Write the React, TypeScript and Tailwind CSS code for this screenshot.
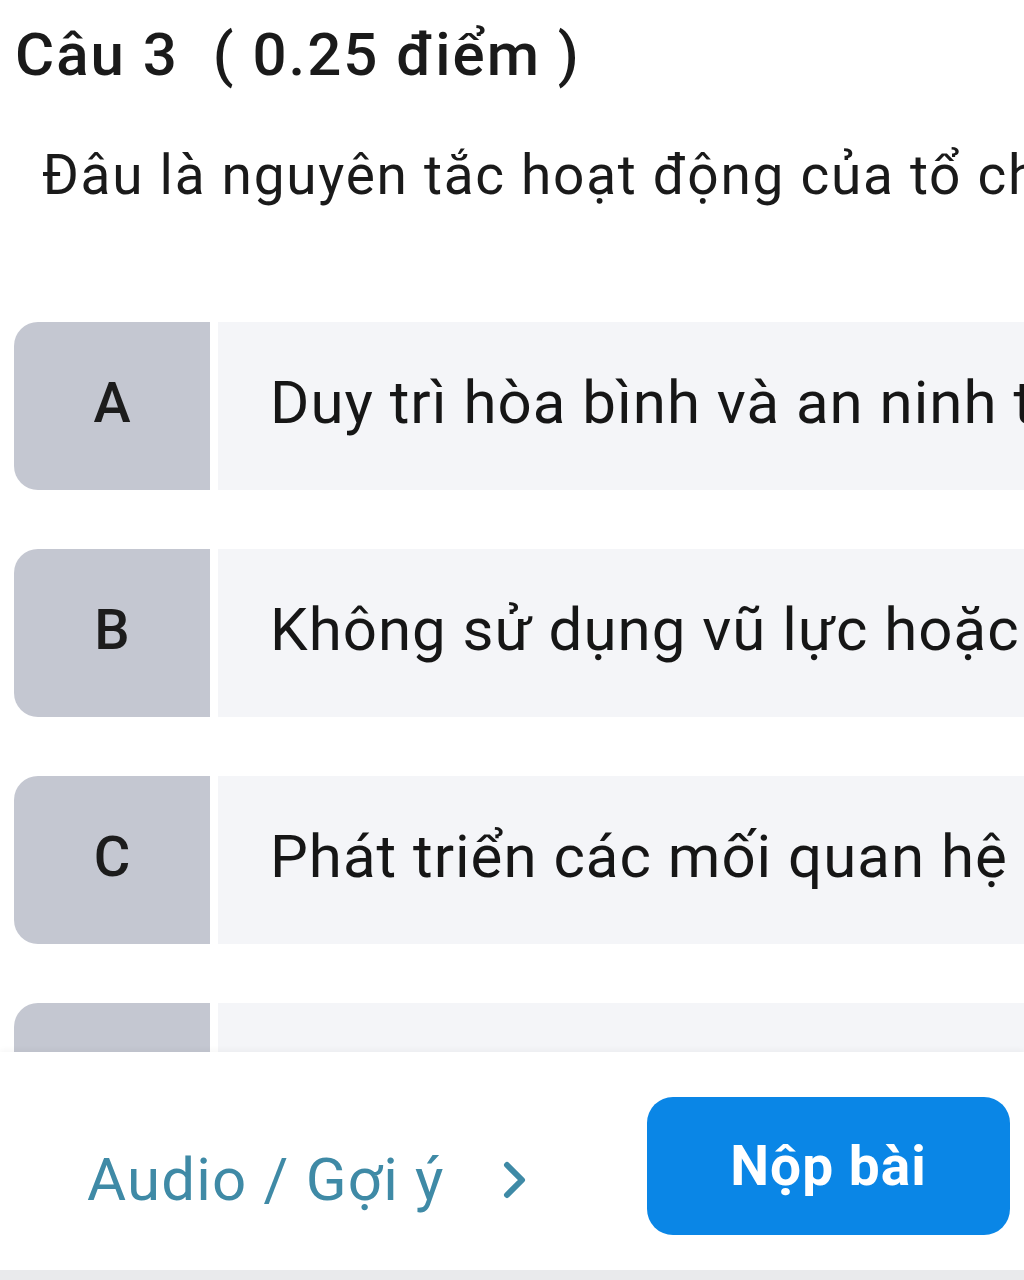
import React from "react";

interface Option {
  key: string;
  text: string;
}

const options: Option[] = [
  { key: "A", text: "Duy trì hòa bình và an ninh thế giới" },
  { key: "B", text: "Không sử dụng vũ lực hoặc đe dọa sử dụng vũ lực" },
  { key: "C", text: "Phát triển các mối quan hệ hữu nghị giữa các dân tộc" },
  { key: "D", text: "Giải quyết các tranh chấp bằng biện pháp hòa bình" },
];

const OptionRow: React.FC<{ option: Option }> = ({ option }) => (
  <div className="flex h-[168px] shrink-0 gap-[8px]">
    <div className="flex w-[196px] shrink-0 items-center justify-center rounded-l-[24px] bg-[#c4c7d1] pb-[6px] text-[56px] font-medium text-[#1c1c1c]">
      {option.key}
    </div>
    <div className="flex flex-1 items-center bg-[#f4f5f8] pb-[6px] pl-[52px] whitespace-nowrap text-[60px] tracking-[1px] text-[#161616]">
      {option.text}
    </div>
  </div>
);

const App: React.FC = () => {
  return (
    <div className="flex h-[1280px] w-[1024px] flex-col overflow-hidden bg-white font-['Roboto','Liberation_Sans',sans-serif]">
      <div className="h-[1052px] shrink-0 overflow-hidden">
        <h1 className="pl-[15px] pt-[20px] text-[60px] leading-[70px] font-medium tracking-[2px] whitespace-nowrap text-[#1a1a1a]">
          Câu 3&nbsp; ( 0.25 điểm )
        </h1>
        <p className="mt-[50px] pl-[42px] text-[55px] leading-[70px] tracking-[1.7px] whitespace-nowrap text-[#1a1a1a]">
          Đâu là nguyên tắc hoạt động của tổ chức Liên hợp quốc?
        </p>
        <div className="mt-[112px] flex flex-col gap-[59px] pl-[14px]">
          {options.map((option) => (
            <OptionRow key={option.key} option={option} />
          ))}
        </div>
      </div>

      <div className="flex flex-1 flex-col bg-white shadow-[0_-2px_6px_rgba(0,0,0,0.04)]">
        <div className="flex flex-1 items-start pt-[45px]">
          <button className="mt-[38px] flex items-center pl-[87px] text-[60px] tracking-[1.2px] text-[#3f8aa6]">
            Audio / Gợi ý
            <svg className="ml-[55px]" width="30" height="44" viewBox="0 0 30 44" fill="none">
              <path d="M7 7 L22 22 L7 37" stroke="#3f8aa6" strokeWidth="6" strokeLinecap="round" strokeLinejoin="round" />
            </svg>
          </button>
          <button className="ml-auto mr-[14px] flex h-[138px] w-[363px] items-center justify-center rounded-[26px] bg-[#0a86e6] text-[55px] font-bold tracking-[1px] text-white">
            Nộp bài
          </button>
        </div>
        <div className="h-[10px] bg-[#e9eaec]" />
      </div>
    </div>
  );
};

export default App;
